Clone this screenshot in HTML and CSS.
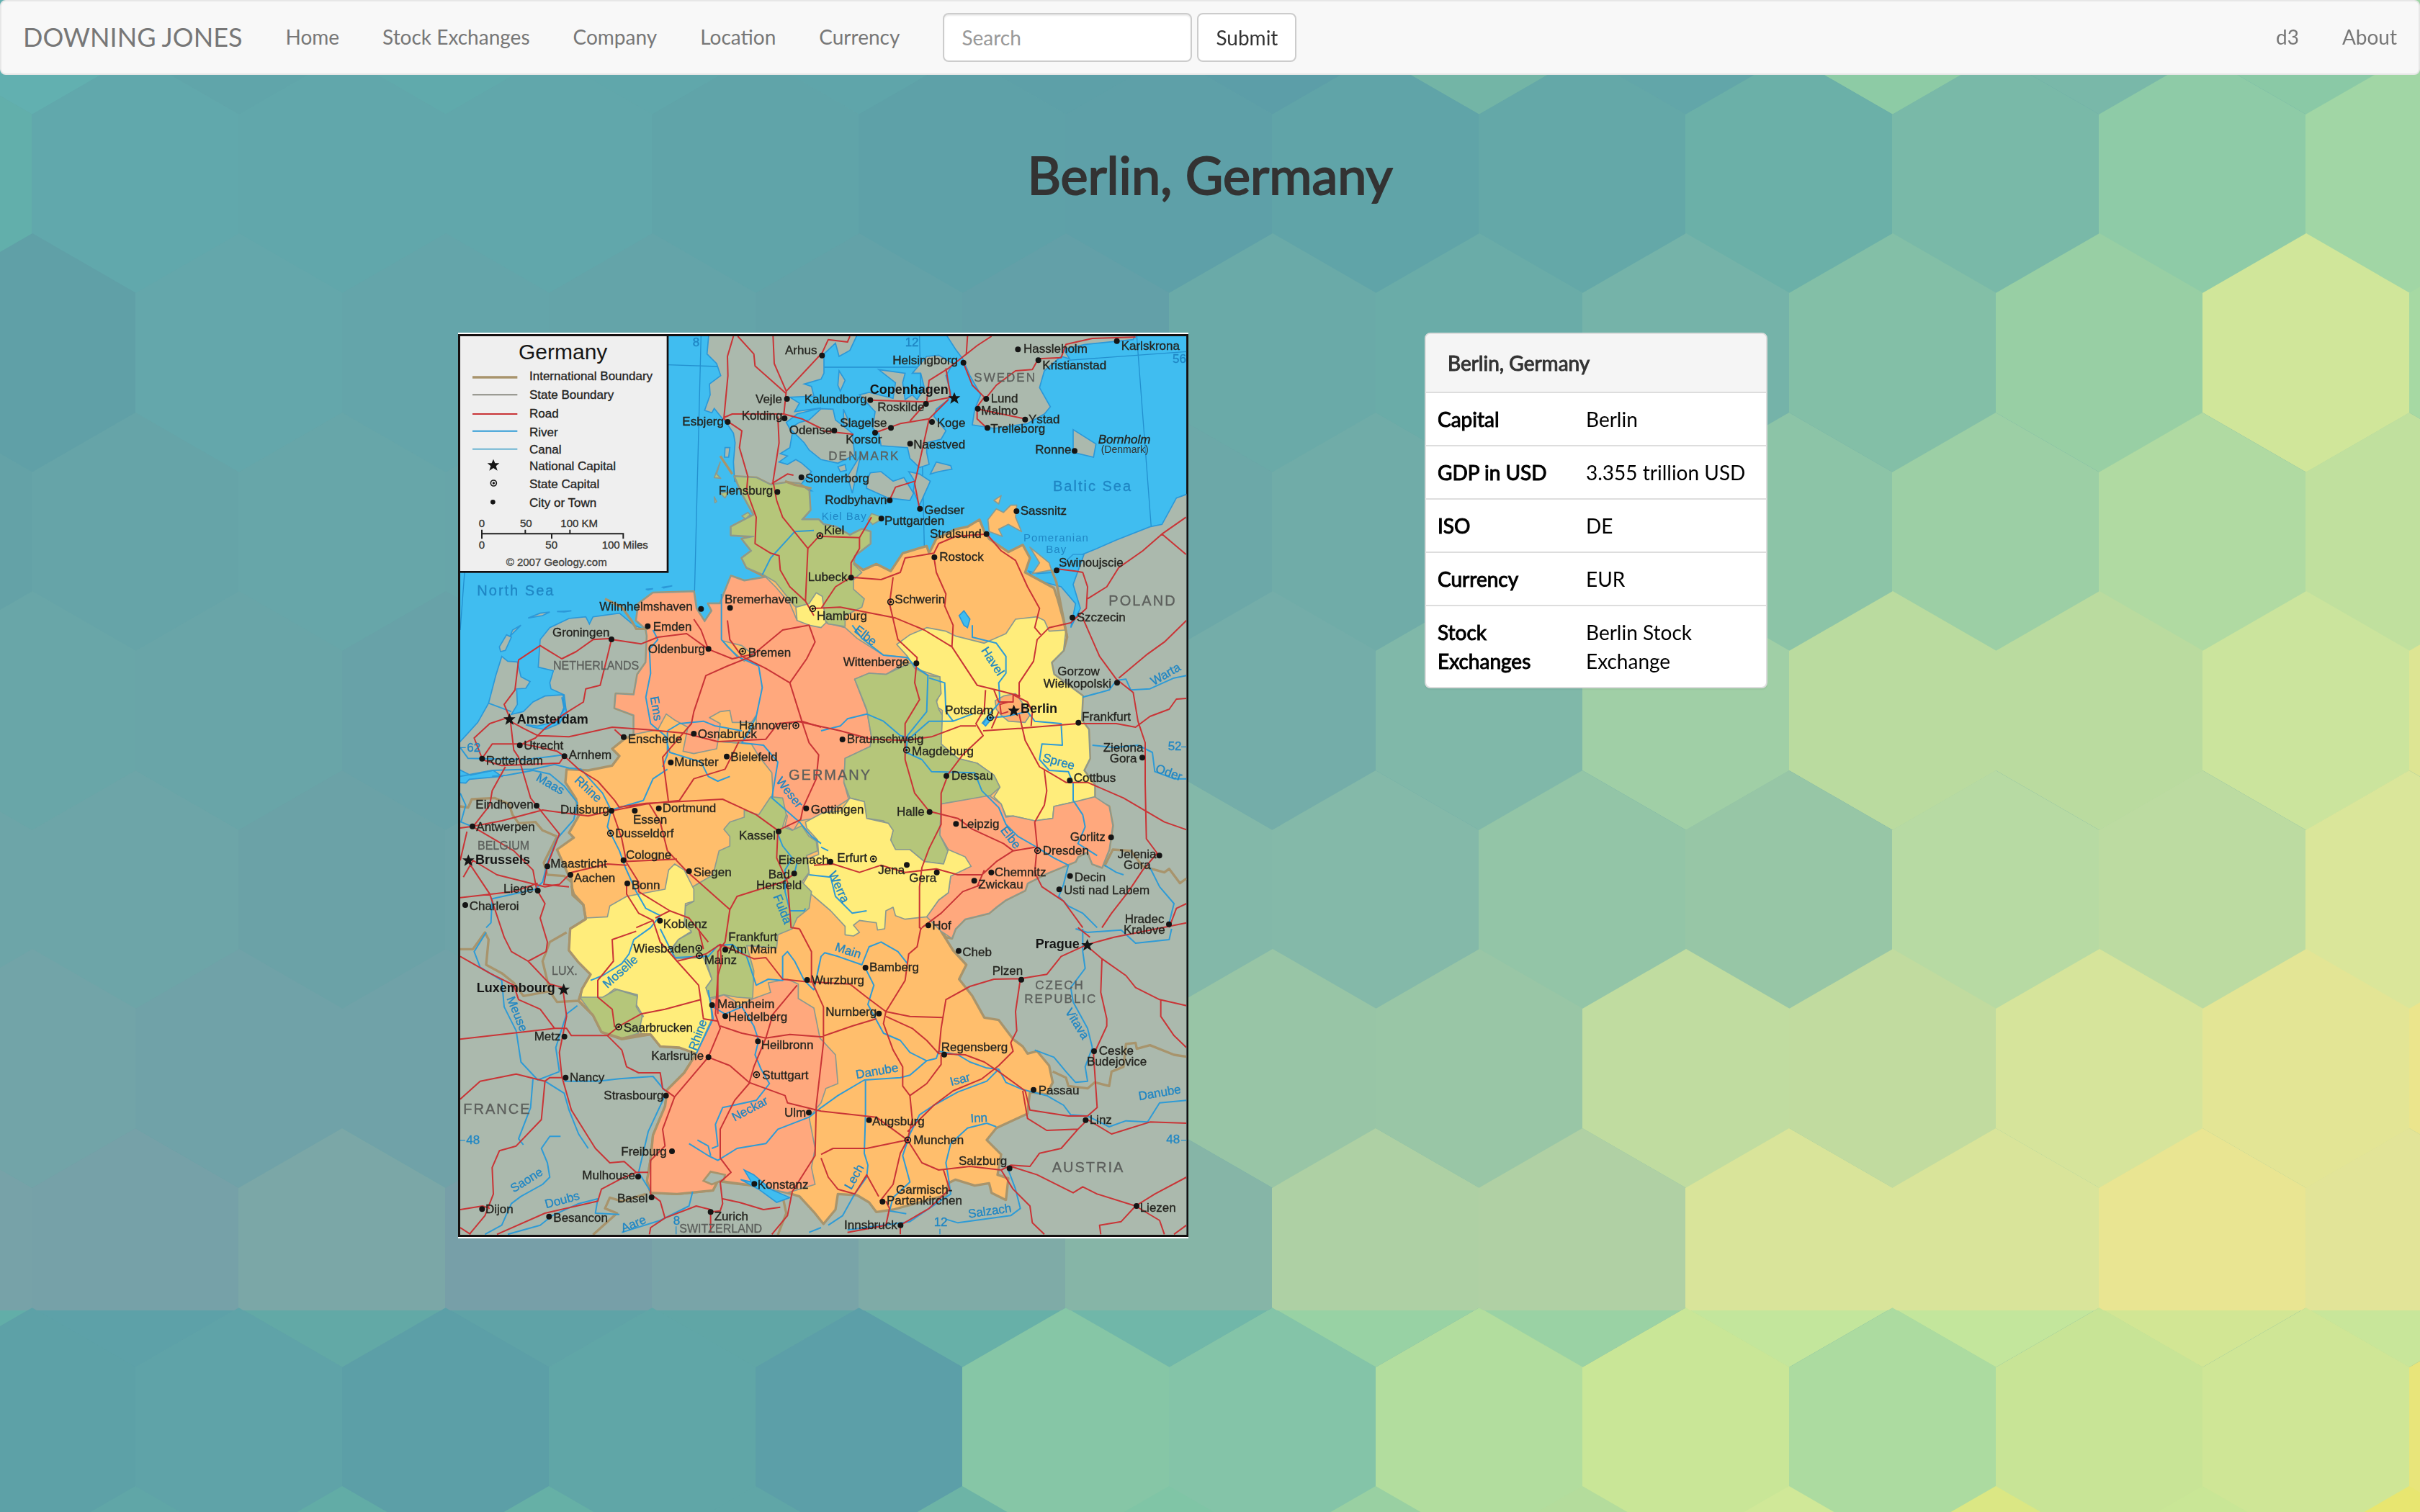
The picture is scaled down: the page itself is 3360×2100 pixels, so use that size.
FILE: index.html
```html
<!DOCTYPE html>
<html lang="en">
<head>
<meta charset="utf-8">
<title>Berlin, Germany</title>
<link rel="stylesheet" href="styles.css">
</head>
<body>
<svg class="backdrop" viewBox="0 0 3360 2100" preserveAspectRatio="xMidYMin slice" aria-hidden="true">
<defs>
<polygon id="hex" points="0,-166 144,-83 144,83 0,166 -144,83 -144,-83"/>
<clipPath id="upper"><rect x="0" y="0" width="3360" height="1820"/></clipPath>
</defs>
<g transform="translate(0 1733)">
<use href="#hex" x="-99" fill="#62aea8"/><use href="#hex" x="188" fill="#5da1a8"/><use href="#hex" x="475" fill="#62a9a6"/><use href="#hex" x="762" fill="#5fa3a7"/><use href="#hex" x="1049" fill="#60a6a6"/><use href="#hex" x="1336" fill="#67b0a8"/><use href="#hex" x="1623" fill="#70b7a9"/><use href="#hex" x="1910" fill="#98d2a4"/><use href="#hex" x="2197" fill="#9ad2a4"/><use href="#hex" x="2484" fill="#c3e69c"/><use href="#hex" x="2771" fill="#c3e69c"/><use href="#hex" x="3058" fill="#d2e694"/><use href="#hex" x="3345" fill="#c8e69a"/>
</g>
<g transform="translate(0 1982)">
<use href="#hex" x="45" fill="#5da1a7"/><use href="#hex" x="332" fill="#5fa3a8"/><use href="#hex" x="619" fill="#5c9fa7"/><use href="#hex" x="906" fill="#60a6a7"/><use href="#hex" x="1193" fill="#5c9fa8"/><use href="#hex" x="1480" fill="#86c6a6"/><use href="#hex" x="1767" fill="#84c4a8"/><use href="#hex" x="2054" fill="#b2dd9e"/><use href="#hex" x="2341" fill="#c9e697"/><use href="#hex" x="2628" fill="#acdba0"/><use href="#hex" x="2915" fill="#c8e496"/><use href="#hex" x="3202" fill="#cfe696"/><use href="#hex" x="3489" fill="#e8e57a"/>
</g>
<g transform="translate(0 2230)">
<use href="#hex" x="188" fill="#60a6a7"/><use href="#hex" x="475" fill="#62aca6"/><use href="#hex" x="762" fill="#66b0a6"/><use href="#hex" x="1049" fill="#60a6a7"/><use href="#hex" x="1336" fill="#6db4a6"/><use href="#hex" x="1623" fill="#80c5a6"/><use href="#hex" x="1910" fill="#99d0a2"/><use href="#hex" x="2197" fill="#b4dc9c"/><use href="#hex" x="2484" fill="#d0e898"/><use href="#hex" x="2771" fill="#dbe784"/><use href="#hex" x="3058" fill="#c9e696"/><use href="#hex" x="3345" fill="#e8e670"/>
</g>
<g clip-path="url(#upper)">
<g transform="translate(0 -7)">
<use href="#hex" x="45" fill="#62b0b0"/><use href="#hex" x="332" fill="#60a5aa"/><use href="#hex" x="619" fill="#60aaac"/><use href="#hex" x="906" fill="#60a7ab"/><use href="#hex" x="1193" fill="#5fa5aa"/><use href="#hex" x="1480" fill="#5da0a8"/><use href="#hex" x="1767" fill="#5c9ea8"/><use href="#hex" x="2054" fill="#73b5a6"/><use href="#hex" x="2341" fill="#62a6a9"/><use href="#hex" x="2628" fill="#8dcba5"/><use href="#hex" x="2915" fill="#79b8a9"/><use href="#hex" x="3202" fill="#8ac9a6"/><use href="#hex" x="3489" fill="#9fd5a5"/>
</g>
<g transform="translate(0 242)">
<use href="#hex" x="-99" fill="#62afab"/><use href="#hex" x="188" fill="#61a8ac"/><use href="#hex" x="475" fill="#61a7ab"/><use href="#hex" x="762" fill="#61a7ab"/><use href="#hex" x="1049" fill="#60a4a9"/><use href="#hex" x="1336" fill="#5ea1a8"/><use href="#hex" x="1623" fill="#5ea0a8"/><use href="#hex" x="1910" fill="#60a4a8"/><use href="#hex" x="2197" fill="#64a8a8"/><use href="#hex" x="2484" fill="#6bb0a8"/><use href="#hex" x="2771" fill="#79b9a8"/><use href="#hex" x="3058" fill="#8ecba7"/><use href="#hex" x="3345" fill="#a1d6a5"/>
</g>
<g transform="translate(0 490)">
<use href="#hex" x="45" fill="#60a0a7"/><use href="#hex" x="332" fill="#64a7ab"/><use href="#hex" x="619" fill="#64a5aa"/><use href="#hex" x="906" fill="#64a4a9"/><use href="#hex" x="1193" fill="#63a2a8"/><use href="#hex" x="1480" fill="#63a0a8"/><use href="#hex" x="1767" fill="#6aaaa8"/><use href="#hex" x="2054" fill="#6aaca8"/><use href="#hex" x="2341" fill="#75b3a9"/><use href="#hex" x="2628" fill="#83bfa7"/><use href="#hex" x="2915" fill="#98cfa4"/><use href="#hex" x="3202" fill="#d0e69a"/><use href="#hex" x="3489" fill="#a6d9a3"/>
</g>
<g transform="translate(0 739)">
<use href="#hex" x="-99" fill="#64a2a7"/><use href="#hex" x="188" fill="#66a4a8"/><use href="#hex" x="475" fill="#67a6a9"/><use href="#hex" x="762" fill="#67a5a9"/><use href="#hex" x="1049" fill="#67a5a9"/><use href="#hex" x="1336" fill="#67a4a8"/><use href="#hex" x="1623" fill="#6ca8a8"/><use href="#hex" x="1910" fill="#70aca8"/><use href="#hex" x="2197" fill="#72ada8"/><use href="#hex" x="2484" fill="#8cc4a7"/><use href="#hex" x="2771" fill="#9ccfa5"/><use href="#hex" x="3058" fill="#b0daa2"/><use href="#hex" x="3345" fill="#c0e09e"/>
</g>
<g transform="translate(0 987)">
<use href="#hex" x="45" fill="#69a6a8"/><use href="#hex" x="332" fill="#69a5a8"/><use href="#hex" x="619" fill="#68a2a8"/><use href="#hex" x="906" fill="#68a2a8"/><use href="#hex" x="1193" fill="#6ca5a8"/><use href="#hex" x="1480" fill="#6fa9a8"/><use href="#hex" x="1767" fill="#74ada9"/><use href="#hex" x="2054" fill="#80b8a9"/><use href="#hex" x="2341" fill="#a0cfa6"/><use href="#hex" x="2628" fill="#badb9f"/><use href="#hex" x="2915" fill="#badb9f"/><use href="#hex" x="3202" fill="#cbe49d"/><use href="#hex" x="3489" fill="#dde593"/>
</g>
<g transform="translate(0 1236)">
<use href="#hex" x="-99" fill="#6da5a8"/><use href="#hex" x="188" fill="#6da5a8"/><use href="#hex" x="475" fill="#6ba2a7"/><use href="#hex" x="762" fill="#6da3a8"/><use href="#hex" x="1049" fill="#6da3a8"/><use href="#hex" x="1336" fill="#70a8a8"/><use href="#hex" x="1623" fill="#83b8a9"/><use href="#hex" x="1910" fill="#84b9a9"/><use href="#hex" x="2197" fill="#93c5a7"/><use href="#hex" x="2484" fill="#97c6a6"/><use href="#hex" x="2771" fill="#b7daa3"/><use href="#hex" x="3058" fill="#bcdba1"/><use href="#hex" x="3345" fill="#dae69a"/>
</g>
<g transform="translate(0 1484)">
<use href="#hex" x="45" fill="#72a4a8"/><use href="#hex" x="332" fill="#70a2a8"/><use href="#hex" x="619" fill="#70a2a8"/><use href="#hex" x="906" fill="#74a4a8"/><use href="#hex" x="1193" fill="#7aa8a8"/><use href="#hex" x="1480" fill="#8ab5a8"/><use href="#hex" x="1767" fill="#98c5a6"/><use href="#hex" x="2054" fill="#99c6a6"/><use href="#hex" x="2341" fill="#c0dca0"/><use href="#hex" x="2628" fill="#c1db9f"/><use href="#hex" x="2915" fill="#d6e49b"/><use href="#hex" x="3202" fill="#e3e595"/><use href="#hex" x="3489" fill="#ebe58c"/>
</g>
<g transform="translate(0 1733)">
<use href="#hex" x="-99" fill="#77a2a8"/><use href="#hex" x="188" fill="#76a1a8"/><use href="#hex" x="475" fill="#7ba7a7"/><use href="#hex" x="762" fill="#779fa8"/><use href="#hex" x="1049" fill="#79a4a8"/><use href="#hex" x="1336" fill="#7faba7"/><use href="#hex" x="1623" fill="#86b5a7"/><use href="#hex" x="1910" fill="#aed0a4"/><use href="#hex" x="2197" fill="#b0d0a4"/><use href="#hex" x="2484" fill="#d9e49a"/><use href="#hex" x="2771" fill="#d9e49a"/><use href="#hex" x="3058" fill="#e9e592"/><use href="#hex" x="3345" fill="#e2e498"/>
</g>
</g>
</svg>

<nav class="navbar">
<a class="brand" href="#">DOWNING JONES</a>
<ul class="nav-links">
<li><a href="#">Home</a></li>
<li><a href="#">Stock Exchanges</a></li>
<li><a href="#">Company</a></li>
<li><a href="#">Location</a></li>
<li><a href="#">Currency</a></li>
</ul>
<form class="nav-search" role="search">
<input class="control" type="text" placeholder="Search" aria-label="Search">
<button class="control" type="button">Submit</button>
</form>
<ul class="nav-links nav-right">
<li><a href="#">d3</a></li>
<li><a href="#">About</a></li>
</ul>
</nav>

<main>
<h1>Berlin, Germany</h1>
<div class="content">
<svg class="map" viewBox="18 21 3042 3774" role="img" aria-label="Map of Germany">
<defs>
<polygon id="star" points="0,-25 7,-8 25,-8 11,4 17,23 0,12 -17,23 -11,4 -25,-8 -7,-8"/>
<g id="ring"><circle r="12" fill="none" stroke="#151515" stroke-width="5"/><circle r="5"/></g>
<clipPath id="frame"><rect x="27" y="36" width="3025" height="3744"/></clipPath>
</defs>
<rect x="18" y="21" width="3042" height="3774" fill="#fff"/>
<rect x="18" y="27" width="3042" height="3762" fill="#151010"/>
<g clip-path="url(#frame)">
<rect x="27" y="36" width="3025" height="3744" fill="#40bdf0"/>
<path class="grid" d="M1030 36L1003 1100M890 155L1100 162M1530 165H1940M1940 36L1960 910M2845 36L2905 830M2560 136L3052 100M45 1020L27 1260"/>

<g class="land">
<path d="M1063 20L1055 110 1095 150 1112 200 1065 235 1068 280 1045 345 1075 355 1085 337 1120 380 1145 410 1165 440 1172 480 1165 560 1170 640 1320 680 1490 680 1445 655 1490 600 1450 565 1425 550 1390 570 1355 560 1390 535 1360 525 1400 500 1410 440 1385 395 1430 360 1530 335 1420 350 1440 315 1400 290 1500 285 1490 245 1460 235 1530 215 1542 190 1542 110 1590 65 1605 120 1650 95 1685 20Z"/>
<path d="M1400 420L1440 395 1480 385 1530 338 1580 340 1590 385 1610 400 1660 440 1670 530 1600 565 1530 550 1480 510 1460 480Z"/>
<path d="M1910 190L1970 120 2020 115 2080 150 2050 200 2070 270 2060 300 2010 340 2000 370 2050 430 2030 465 1970 480 1970 520 1980 570 1940 583 1900 545 1890 500 1780 492 1770 440 1745 420 1755 350 1690 280 1730 270 1830 295 1840 230 1770 175 1880 190 1870 230 1880 300 1910 280 1930 300 1960 250 1945 190Z"/>
<path d="M1720 640L1735 605 1780 600 1830 640 1875 625 1915 690 1900 720 1810 710 1720 670ZM1895 600L1940 610 1985 640 1940 740 1915 680 1920 640ZM1985 610L2010 560 2070 575 2075 590 2020 600ZM1695 530L1660 690 1640 620ZM1605 180L1630 220 1610 265 1600 240ZM1600 580L1630 570 1635 595 1610 600ZM1623 340L1650 400 1625 410Z"/>
<path d="M2045 20L2090 90 2120 130 2150 200 2195 280 2170 340 2160 405 2250 420 2390 400 2460 360 2485 330 2440 250 2460 180 2530 120 2565 130 2540 90 2630 70 2830 50 2840 20Z"/>
<path d="M2580 425L2675 485 2665 540 2580 520ZM1130 500L1150 500 1145 540 1128 540ZM800 1090L830 1088 810 1093ZM870 1082L910 1076 875 1085ZM310 1210L360 1190 400 1185 370 1200ZM430 1183L490 1180 460 1185ZM235 1285L280 1240 245 1260ZM190 1330L220 1280 240 1290 215 1345 195 1350Z"/>
<path d="M0 1750L27 1725 100 1645 145 1565 175 1450 200 1370 225 1390 265 1393 280 1455 318 1475 300 1503 262 1505 265 1570 240 1612 290 1600 330 1560 380 1535 455 1530 460 1580 440 1630 400 1650 330 1665 400 1665 470 1610 460 1530 405 1505 400 1480 415 1430 352 1415 360 1300 400 1250 480 1212 550 1205 565 1235 580 1205 690 1190 750 1240 800 1260 1500 1400 2560 1000 2570 965 2680 920 2760 885 2900 830 2950 820 3010 710 3052 695 3080 690V3800H0Z"/>
</g>
<path class="water" d="M10 1835L70 1865 165 1845 200 1870 65 1882 50 1898 10 1895ZM300 1655L350 1660 430 1640 460 1590 450 1540 470 1600 440 1650 380 1675 330 1665ZM2395 1015L2430 1025 2500 1020 2580 945 2625 945 2580 1070 2610 1170 2570 1250 2590 1150 2530 1080 2420 1050Z"/>

<path class="germany" d="M1170 620L1260 625 1320 655 1390 645 1440 650 1480 680 1485 760 1450 800 1520 800 1540 820 1590 830 1650 865 1700 840 1735 850 1735 900 1670 950 1665 980 1705 1010 1760 985 1820 1015 1870 940 1970 910 1980 940 2010 880 2090 840 2140 830 2190 800 2210 850 2230 880 2310 935 2370 905 2400 960 2380 1020 2500 1085 2515 1130 2540 1220 2555 1290 2540 1345 2490 1395 2500 1445 2620 1535 2615 1635 2645 1675 2650 1795 2625 1845 2670 1905 2670 1965 2730 1995 2745 2075 2730 2175 2700 2250 2660 2235 2640 2185 2600 2205 2590 2225 2470 2275 2390 2315 2380 2345 2300 2385 2260 2415 2230 2440 2130 2465 2090 2505 2075 2545 2050 2540 2030 2515 2080 2595 2135 2655 2105 2715 2160 2785 2210 2875 2270 2885 2330 2965 2370 2995 2390 3025 2430 3015 2480 3075 2495 3145 2470 3195 2400 3185 2395 3225 2390 3275 2260 3335 2220 3385 2280 3445 2265 3530 2310 3545 2300 3635 2240 3605 2230 3565 2170 3575 2090 3550 2060 3565 2050 3615 1830 3675 1760 3685 1730 3645 1680 3615 1600 3610 1590 3675 1540 3735 1500 3685 1440 3620 1390 3605 1250 3575 1160 3565 1100 3555 1080 3595 930 3610 820 3605 805 3555 820 3465 830 3365 880 3245 890 3175 960 3105 1010 3025 940 3000 860 2995 820 2945 700 2965 615 2935 580 2865 520 2805 535 2755 570 2695 520 2645 480 2595 485 2505 550 2465 540 2405 495 2365 490 2295 475 2275 430 2175 500 2125 480 2105 520 2035 510 1965 465 1895 470 1840 560 1845 660 1825 690 1785 660 1755 710 1715 750 1695 750 1615 670 1585 675 1525 750 1530 765 1445 800 1395 805 1285 800 1255 760 1220 770 1150 830 1105 1000 1100 1010 1170 1045 1225 1075 1180 1060 1150 1110 1150 1125 1110 1155 1035 1210 1055 1300 1040 1220 1000 1200 960 1240 930 1200 880 1250 870 1155 865 1155 830 1250 780 1200 690Z"/>
<g class="state">
<path class="orange" d="M2225 800L2260 755 2290 770 2320 740 2345 740 2340 790 2365 850 2310 820 2270 840 2285 870 2230 850ZM2250 720L2280 700 2270 735ZM2400 915L2480 980 2490 1010 2410 1025 2440 980Z"/>
<path class="salmon" d="M800 1255L760 1220 770 1150 830 1105 1000 1100 1010 1170 1045 1225 1075 1180 1060 1150 1110 1150 1125 1110 1155 1035 1210 1055 1300 1040 1340 1080 1400 1150 1430 1220 1550 1230 1630 1250 1680 1295 1790 1365 1890 1375 1850 1415 1800 1445 1730 1440 1670 1465 1720 1595 1740 1705 1735 1745 1630 1795 1625 1895 1645 1965 1530 2040 1440 2055 1415 2095 1380 2075 1390 2035 1330 1955 1325 1855 1270 1785 1240 1735 1100 1725 1095 1755 1000 1775 955 1765 975 1665 920 1635 885 1610 850 1675 750 1695 750 1615 670 1585 675 1525 750 1530 765 1445 800 1395 805 1285Z"/>
<path class="orange" d="M1065 1625L1110 1600 1150 1595 1160 1645 1240 1645 1260 1615 1260 1655 1210 1715 1190 1730 1100 1725 1110 1650ZM1120 1305L1200 1325 1250 1365 1210 1390 1140 1330Z"/>
<path class="green" d="M1170 620L1260 625 1320 655 1390 645 1440 650 1480 680 1485 760 1450 800 1520 800 1540 820 1590 830 1650 865 1700 840 1735 850 1735 900 1670 950 1665 985 1700 1020 1665 1050 1665 1090 1710 1130 1700 1165 1630 1200 1630 1245 1560 1235 1520 1190 1420 1160 1340 1060 1290 1030 1220 1000 1200 960 1240 930 1200 880 1250 870 1155 865 1155 830 1250 780 1200 690ZM1725 800L1740 775 1770 785 1780 800 1745 820ZM1200 785L1225 770 1235 780 1215 797ZM1085 625L1110 560 1095 610 1112 628ZM1110 690L1145 685 1130 710ZM1085 705L1095 725 1088 730Z"/>
<path class="yellow" d="M1425 1165L1480 1150 1510 1105 1535 1120 1550 1230 1530 1250 1480 1240 1430 1220Z"/>
<path class="yellow" d="M1845 1320L1900 1280 1970 1250 2050 1265 2090 1285 2210 1315 2300 1275 2340 1215 2430 1205 2460 1220 2480 1265 2550 1260 2540 1345 2490 1395 2500 1445 2620 1535 2615 1635 2645 1675 2650 1795 2625 1845 2670 1905 2670 1965 2590 1975 2500 1995 2495 2045 2420 2055 2330 2035 2300 2035 2280 1985 2250 1955 2275 1915 2250 1865 2180 1815 2100 1795 2030 1735 2035 1595 2005 1575 2025 1525 2025 1455 1920 1420 1890 1370Z"/>
<path class="berlin" d="M2255 1555L2290 1535 2340 1525 2370 1565 2400 1615 2380 1645 2310 1640 2280 1615 2260 1590Z"/>
<path class="green" d="M1720 2045L1710 1975 1650 1960 1625 1895 1630 1795 1735 1745 1740 1705 1720 1590 1670 1465 1730 1440 1800 1445 1905 1395 1920 1420 1980 1450 2025 1455 2030 1525 2010 1555 2020 1590 2035 1615 2030 1735 2100 1795 2180 1815 2250 1865 2275 1915 2230 1955 2030 1985 2025 2115 2060 2185 2040 2235 1960 2225 1900 2175 1840 2175 1820 2135 1830 2095 1790 2055Z"/>
<path class="salmon" d="M2030 1985L2230 1950 2280 1985 2300 2040 2330 2035 2420 2055 2495 2045 2500 1995 2590 1975 2670 1955 2730 1995 2745 2075 2730 2175 2700 2250 2660 2235 2640 2185 2600 2205 2590 2225 2470 2275 2390 2315 2380 2345 2300 2385 2260 2415 2230 2440 2130 2465 2090 2505 2075 2545 2030 2515 1970 2455 2020 2385 2060 2355 2070 2285 2150 2245 2060 2175 2025 2115Z"/>
<path class="yellow" d="M1650 1960L1710 1975 1720 2045 1810 2065 1830 2095 1820 2135 1840 2175 1900 2175 1960 2225 2040 2235 2060 2175 2130 2205 2155 2245 2070 2285 2060 2355 2020 2385 1970 2455 1880 2465 1840 2450 1830 2415 1800 2430 1795 2505 1765 2510 1760 2480 1690 2470 1665 2490 1690 2520 1665 2535 1630 2530 1630 2495 1570 2430 1500 2370 1450 2325 1480 2275 1470 2215 1520 2195 1515 2135 1470 2085 1465 2060 1540 2020 1610 2015Z"/>
<path class="green" d="M1320 1955L1370 1960 1385 2030 1370 2080 1410 2095 1450 2075 1480 2120 1510 2140 1515 2180 1470 2200 1480 2270 1450 2310 1490 2350 1480 2420 1430 2460 1410 2505 1350 2530 1345 2585 1220 2575 1250 2680 1245 2795 1180 2790 1125 2780 1060 2795 1050 2750 1075 2715 1050 2635 925 2630 905 2600 935 2550 990 2520 960 2490 965 2410 1000 2390 995 2330 1080 2280 1105 2180 1150 2160 1150 2120 1125 2090 1150 2060 1210 2040 1210 2010 1270 2030Z"/>
<path class="yellow" d="M485 2505L550 2460 640 2455 650 2410 720 2370 880 2340 895 2260 920 2235 960 2260 1000 2340 1000 2390 965 2400 960 2490 990 2515 935 2550 905 2590 925 2630 1040 2625 1075 2715 1050 2750 1070 2810 1075 2880 1010 3025 940 3000 860 2995 820 2945 780 2940 770 2880 790 2870 760 2820 765 2780 670 2755 620 2795 530 2790 535 2755 570 2695 520 2645 480 2595Z"/>
<path class="green" d="M525 2790L620 2790 680 2758 765 2785 760 2830 785 2870 770 2940 700 2962 615 2935 580 2865Z"/>
<path class="salmon" d="M1010 3025L1080 2880 1070 2800 1125 2780 1170 2805 1180 2830 1250 2795 1320 2770 1310 2730 1390 2715 1435 2735 1435 2795 1500 2835 1525 2960 1590 3030 1600 3150 1550 3170 1530 3230 1480 3290 1505 3420 1490 3500 1505 3570 1390 3605 1250 3575 1160 3565 1100 3555 1080 3595 930 3610 820 3605 805 3555 820 3465 830 3365 880 3245 890 3175 960 3105Z"/>
</g>
<path class="border-line" d="M27 1995L60 2000 75 1965 170 1960 230 1985 245 2030 270 2065 340 2060 370 2095 430 2120M430 2120L375 2230 390 2280 460 2285 490 2310M27 2590L80 2590 130 2520 145 2550 135 2655 200 2690 250 2730 290 2785 400 2765 430 2810 520 2805M400 2765L370 2640 400 2560 470 2520M490 2325L500 2360 540 2405 550 2465 485 2505 480 2595 520 2645 570 2695 535 2755 520 2805M580 3780L680 3690 630 3670 650 3625 700 3640 800 3610M520 2805L580 2865 615 2935 700 2962 780 2945 820 2945 860 2995 940 3000 1010 3025 960 3105 890 3175 880 3245 830 3365 820 3465 805 3555 820 3605 930 3610 1080 3595 1100 3555 1250 3575M1370 3620L1385 3690 1350 3780M2495 3100L2550 3125 2560 3160 2640 3170 2670 3145 2730 3160 2740 3100 2790 3080 2800 2985 2840 2980 2845 3005 2900 2990 3000 3030 3052 3038M2710 2245L2745 2175 2820 2180 2870 2245 2960 2270 2980 2255 3025 2315 3052 2295M2490 1010L2510 1060 2555 1290M630 1130L700 1165 740 1220 760 1255 810 1255M1110 535L1160 610M1380 640L1420 655 1490 670"/>
<path class="land-fill" d="M1040 3555L1070 3517 1130 3530 1125 3550 1075 3570Z"/>
<path class="water" d="M1210 3510L1250 3530 1320 3590 1400 3625 1345 3645 1270 3590 1195 3550 1240 3560ZM2105 1200L2125 1180 2150 1215 2140 1250 2125 1240ZM2205 1650L2225 1620 2245 1625 2215 1660Z"/>

<g class="river">
<path d="M1285 1030L1320 960 1420 850 1500 845M1115 1110L1115 1300 1180 1370 1270 1410 1285 1500 1260 1620 1230 1680 1200 1730 1290 1740 1350 1810 1325 1960 1440 2060 1490 2120 1530 2150M830 1260L850 1300 815 1340 820 1440 800 1540 820 1650 880 1700 900 1770 1030 1810 1060 1870 1100 1890 1150 1870"/>
<path d="M890 1680L940 1650 1040 1640 1090 1660 1200 1680M870 1830L890 1780 890 1680M655 2010L790 1970 830 1880 890 1840M27 1750L60 1795 300 1800 460 1780M27 1870L160 1845 330 1840 420 1820 480 1835 530 1840 620 1940 655 2010 640 2080 690 2180 715 2250 760 2350 800 2420 860 2450M27 1940L50 1990 30 2060 80 2080M160 1870L220 1865 330 1845 400 1860 460 1910 515 1980 500 2050 430 2130 390 2230 370 2310 340 2340 160 2380 155 2480 135 2500M145 1565L240 1600M860 2450L820 2500 750 2550 730 2610 700 2650 620 2700 570 2720M860 2505L920 2625 1030 2620 1060 2620 1100 2575 1160 2570 1220 2620 1260 2740 1310 2715 1370 2720 1370 2620 1390 2600 1420 2640 1460 2720 1500 2760M1500 2760L1530 2620 1545 2605 1600 2620 1700 2655 1730 2580 1780 2560 1850 2600 1890 2650M1710 2660L1750 2740 1725 2820 1790 2940 1860 2970 1900 3020 1970 3055"/>
<path d="M1350 2110L1370 2160 1410 2210 1380 2260 1380 2350 1400 2430 1460 2430 1465 2420M1420 2270L1430 2230M1530 2165L1560 2180M1480 2280L1570 2290 1590 2370 1660 2440 1720 2430"/>
<path d="M1660 1240L1700 1295 1790 1365 1890 1375 1920 1410 1975 1450 1970 1600 1930 1650 1890 1700 1885 1770 1950 1800 1990 1850 2170 1855 2200 1930 2270 2000 2300 2070 2350 2120 2420 2160 2500 2210 2560 2240 2540 2320 2520 2370 2560 2410 2620 2440 2680 2500"/>
<path d="M1530 1680L1610 1660 1640 1630 1720 1610 1790 1640 1860 1700 1900 1710 1980 1640 2080 1640 2160 1610M1980 1460L2045 1480 2050 1600 2080 1640M2160 1240L2160 1290 2260 1315 2300 1370 2300 1440 2270 1480 2275 1560 2240 1600 2200 1650M2240 1625L2300 1620 2390 1600 2420 1640 2530 1650 2535 1740 2450 1735 2440 1800 2480 1845 2560 1850 2580 1900 2580 1970 2620 2030 2630 2080 2600 2150 2680 2200M2620 1540L2730 1510 2760 1470 2800 1465 2820 1510 2900 1505 3000 1460 3052 1450M2660 1740L2750 1750 2850 1740 2910 1770 2920 1850 3000 1880 3052 1880M2710 2240L2760 2270 2790 2280M2900 2250L2940 2330 3000 2400 2980 2480M2590 2505L2640 2520 2780 2510 2840 2565 2980 2550 2990 2505M2620 2505V2600L2630 2670 2570 2750 2580 2810 2640 2920 2660 3000 2630 3080 2640 3140 2590 3145 2550 3100 2500 3040 2420 3010"/>
<path d="M1530 3250L1600 3200 1710 3135 1860 3125 1900 3115 1970 3055 2010 3045 2020 3015 2100 3030 2150 3060 2220 3085 2270 3090 2300 3145 2370 3175 2470 3200 2540 3240 2570 3280 2640 3285 2730 3330 2800 3305 2890 3310 2940 3230 3052 3220M1715 3135L1715 3280 1710 3440 1725 3490 1720 3540 1670 3610 1620 3700 1560 3740M2270 3090L2220 3140 2100 3185 2000 3240 1940 3280 1900 3360 1870 3450 1900 3560 1830 3625 1815 3680 1885 3692M2260 3330L2220 3315 2140 3335 2070 3400 2050 3480 2060 3540 2070 3610 1980 3670 1900 3725 1640 3760M2310 3510L2340 3590 2360 3670 2320 3700 2100 3730 2050 3715"/>
<path d="M135 2520L85 2600 110 2665 200 2720 210 2830 260 2930 280 3060 350 3135 440 3100M330 3130L320 3250 270 3380 290 3405M440 3100L425 3000 470 2860 515 2825M460 3140L600 3140 690 3130 830 3120 880 3180M880 3200L810 3350 770 3520 820 3600M380 3140L460 3190 480 3260 520 3360 560 3420M445 3370L400 3370 365 3420 390 3480 400 3540 370 3570 280 3620 240 3650 200 3740 130 3778M225 3778L360 3740 410 3700 520 3650 600 3630 590 3690 690 3695M700 3770L860 3720 980 3660 995 3600M1010 3025L1080 2880 1060 2760M1080 2830L1130 2860 1200 2830 1250 2910 1270 2970 1255 3030 1280 3090 1315 3150 1260 3220 1120 3250 1090 3320 1100 3410 1075 3420M980 3400L1060 3450 1100 3470 1180 3420 1300 3400 1350 3340 1480 3290 1530 3250M1015 3385L1060 3410 1070 3450M1480 3770L1530 3750"/>
</g>

<g class="road">
<path d="M1165 36L1140 120 1142 200 1125 380 1200 430 1190 500 1225 620 1220 680 1260 790 1255 900 1320 940 1355 950 1360 1010 1400 1080 1465 1140M1125 375L1160 360 1375 360 1385 265 1530 110M1183 36L1250 110 1255 160 1385 275M1330 36L1335 150 1385 265M1375 360L1450 380 1530 420M1350 370L1355 480 1330 640 1345 720 1370 790 1475 920 1530 860M1325 650L1390 610 1415 615M1475 920L1465 1140 1500 1200M1530 115L1560 50 1640 60 1650 36"/>
<path d="M2140 36L2135 110 2060 170 1980 220 1970 310 1735 302M2120 140L2160 240 2210 290 2180 330 2180 380 2220 418M2130 115L2180 75 2240 36M2050 170L2070 290 1970 310M2060 300L1980 380 1940 560 1920 650 1940 755M1755 438L1860 400 1980 380M1900 390L1970 310M1535 430L1665 445M2185 340L2380 380M2220 290L2260 240 2340 180 2410 175 2435 130 2530 125 2550 70 2660 45 2840 40M1920 640L1840 665 1815 720"/>
<path d="M1530 870L1690 875 1740 790M1690 875L1690 920 1655 980 1655 1040 1590 1080 1530 1170M1655 1040L1780 1050 1860 1020 1880 960 2000 940 2020 900 2090 870 2220 860 2280 930 2340 970 2390 1080 2440 1170 2420 1250 2445 1280M1830 1040L1815 1150 1850 1300 1930 1375 1920 1480 1940 1550 1880 1650 1880 1800 1920 1940 1980 2015M2000 955L2010 1020 2050 1110 2045 1160 2080 1240 2075 1330M1500 1170L1610 1165 1840 1210 1960 1260 2075 1330 2180 1490 2260 1510 2360 1535M2510 1005L2590 1015 2620 1020 2640 1080 2635 1170 2570 1230 2480 1250 2430 1300 2415 1390 2355 1480 2355 1540M2640 1130L2720 1080 2770 1000 2870 930 2950 860 3050 790M2950 860L3050 945M2620 1210L2690 1370 2760 1465 2830 1520 2850 1640 2880 1730 2880 1900 2885 2130 2930 2190 2870 2260 2810 2350 2740 2440 2700 2500M2770 1460L2890 1360 2960 1310 3052 1220"/>
<path d="M2215 1510L2210 1590 2175 1650 2205 1700 2120 1780 2060 1860 2030 1940 2030 2070 1980 2170 1950 2250 1940 2330 1940 2500 1950 2505M2250 1510L2270 1560 2330 1560 2330 1530 2390 1560 2410 1600 2405 1660M2310 1560L2275 1570 2280 1610 2310 1600M2270 1600L2240 1670M2175 1660L2110 1660 1990 1705 1880 1720 1740 1715 1610 1680 1430 1640M2205 1680L2350 1670 2600 1650 2760 1650 2840 1665 2900 1620 2980 1590 3010 1548 3052 1545M2355 1610L2380 1720 2440 1830 2550 1895 2640 1895 2790 1960 2960 2060 3052 2092M2460 1845L2470 1930 2460 1990 2420 2060 2430 2160 2420 2270 2450 2330 2540 2390 2620 2500M1980 2015L2100 2045 2160 2090 2290 2150 2330 2180 2420 2165M2330 2180L2260 2225 2200 2280 2100 2280 2010 2255 1880 2270 1780 2240 1690 2270 1580 2235 1500 2240M2180 2330L2210 2260M2200 2320L2120 2350 2030 2440 1950 2500"/>
<path d="M1000 1215L1030 1260 1060 1340 1160 1380 1250 1360 1370 1260 1480 1240 1505 1310 1470 1380 1400 1480 1450 1640 1480 1730 1520 1780 1510 1880 1455 2000 1445 2050 1350 2095 1345 2210 1390 2310 1405 2500 1440 2505M1140 1220L1150 1300 1200 1370 1300 1420 1400 1480M1240 1370L1140 1410 1050 1450 1000 1600 990 1650 870 1790 895 1980M660 1300L780 1318 850 1290 970 1275 1060 1340M657 1300L640 1370 610 1490 550 1505 540 1560 460 1610 380 1670 340 1710 275 1740M657 1295L580 1300 510 1350 450 1380 360 1325 270 1385 255 1510 210 1570 235 1630 250 1760 270 1790 320 1960 440 2110 390 2240 375 2320 480 2330M235 1640L290 1670 350 1700 480 1705 660 1665 800 1675 960 1690 1100 1725 1300 1715 1350 1650 1450 1640 1530 1665M670 1675L705 1707M225 1625L150 1650 85 1710 118 1795 160 1735 290 1735 430 1765 460 1785 520 1840 600 1890 670 1970 690 2000M118 1800L200 1825 440 1815 460 1785M215 1830L160 1930 150 1990 80 2080 250 2180 330 2260 345 2340 380 2400 360 2460 390 2560 385 2600 310 2640M27 2085L78 2078 200 2055 370 2010 560 2035 660 2013 800 1985 940 1970 1000 1880 1130 1840 1190 1720M690 1998L800 1982 1120 1965 1260 2030 1350 2095M815 1985L860 2060 890 2180 970 2265 1150 2425 1130 2560 1100 2600 1100 2860M660 2013L700 2130 720 2230 770 2310 770 2350 900 2430 980 2460 1060 2560M700 2225L930 2215M720 2240L640 2235 490 2270 440 2320 380 2330 180 2280 80 2220 40 2290M60 2225L150 2360 210 2540 240 2600 310 2640 400 2735 455 2750M27 2375L250 2350 350 2315M55 2100L27 2220M720 2320V2360L770 2440 830 2470 760 2500M830 2470L860 2560 930 2640 1020 2740 1040 2880 1100 2890M1150 2425L1180 2370 1370 2310M1370 2310L1420 2275M900 2430L840 2460"/>
<path d="M27 2620L150 2690 250 2740 270 2800 360 2840 420 2920 27 2965M455 2760L470 2870 440 3020 450 3120 490 3260 590 3420 650 3480 710 3475 760 3520 810 3520M420 2920L470 2920 490 2950 640 2950 700 3010 720 3080 770 3105 860 3105 870 3170 920 3205M640 2950L690 2910 780 2860 880 2840 1030 2800M760 2515L660 2550 665 2640 600 2720 600 2790 660 2840 670 2915M27 3215L110 3140 260 3110 380 3140 365 3300 260 3410 190 3430 160 3500 165 3610 130 3700 65 3778M380 3140L400 3125 450 3125M27 3675L120 3660 150 3670M27 3750L70 3778M180 3778L380 3690 600 3640 615 3590 700 3545 760 3520M1060 3040L920 3205 870 3340 880 3410 820 3470 820 3610 860 3640 880 3710 820 3750 815 3778M930 2640L1050 2610 1110 2570 1250 2630 1300 2625 1370 2715 1460 2725 1650 2735M1110 2570L1115 2650 1100 2700 1090 2860 1110 2920 1060 3040M1110 2910L1200 2940 1300 2960 1400 2945 1530 2955 1660 2910 1760 2880M1430 2740L1330 2860 1300 2960 1250 3080 1230 3150 1170 3220 1110 3340 1110 3460 1155 3520 1110 3560 1120 3650 1110 3680 1070 3685M1060 3040L1150 3075 1230 3145 1380 3200 1390 3230 1530 3265 1760 3290 1890 3385M1440 2505L1490 2600 1490 2720 1540 2830 1540 2980 1510 3240 1505 3450 1410 3600 1390 3700 1325 3778M880 3710L1010 3660 1070 3675M1120 3630L1190 3645 1290 3675 1360 3665M1070 3690L1070 3770M1020 2505L1040 2590"/>
<path d="M1945 2505L1930 2580 1895 2610 1880 2720 1800 2850 1790 2900 1830 3010 1870 3080 1870 3160 1900 3200 1910 3300 1890 3385 1860 3440 1830 3570 1775 3640M1650 2735L1720 2790 1800 2850 1900 2870 2040 2875M1800 2870L1910 2920 1970 2970 2020 3025 2130 3030 2210 3060 2270 3100 2380 3180 2400 3260 2560 3285 2640 3285 2680 3250 2665 3030 2720 2910 2720 2880 2695 2770 2700 2630M2370 3180L2390 3295 2470 3345 2600 3340 2640 3300 2740 3360 2900 3310 3052 3315M2020 3025L2030 2920 2050 2800 2150 2745 2250 2715 2360 2713 2470 2695 2530 2620 2640 2570 2750 2540 3052 2480M2360 2715L2340 2850 2345 2930 2320 2980 2330 3015 2270 3075 2200 3130 2080 3180 2000 3240 1890 3350M2630 2570L2700 2630 2800 2700 2840 2750 2940 2800 3052 2825M2945 2800L2945 2870 3000 2950 3052 3000M1530 3445L1580 3420 1720 3420 1890 3385 1950 3480 2020 3510 2150 3495 2280 3510 2320 3490 2400 3495 2440 3440 2530 3420 2600 3340M2040 3510L2065 3590 1980 3670M1530 3460L1560 3540 1600 3590 1670 3610 1720 3530 1770 3620M1800 3640L1815 3670 1800 3740 1640 3770M1860 3740L1980 3670M1860 3740V3778M2280 3510L2330 3590 2400 3660 2410 3730 2460 3778M2320 3495L2430 3530 2580 3605 2620 3580 2680 3610 2840 3660 2920 3610 3052 3540M2840 3660L2780 3725 2690 3740 2695 3778M2840 3660L2940 3720 2960 3778M3052 3740L3000 3778M2650 2540L2600 2500M2980 2500L3010 2420 3052 2400M2030 3030L2030 3070 1970 3150 1900 3200"/>
</g>

<path class="dots" d="M1388 297h0M1378 378h0M1141 393h0M1448 624h0M1348 685h0M1030 1172h0M1151 1168h0M808 1244h0M1534 116h0M2123 146h0M2350 91h0M2762 56h0M2435 136h0M1735 302h0M1967 318h0M2218 297h0M2183 338h0M2380 383h0M2223 418h0M1992 393h0M1821 418h0M1755 438h0M1585 429h0M1901 484h0M2586 514h0M1816 720h0M1942 755h0M2344 765h0M1781 796h0M2219 860h0M2002 957h0M2511 1012h0M1655 1042h0M2577 1208h0M657 1299h0M1061 1339h0M1000 1692h0M708 1706h0M275 1741h0M461 1786h0M118 1796h0M904 1812h0M1137 1787h0M345 1992h0M657 2013h0M754 2013h0M854 2003h0M1468 2003h0M78 2078h0M1353 2099h0M707 2219h0M390 2245h0M486 2280h0M980 2265h0M1418 2275h0M723 2316h0M350 2346h0M48 2406h0M859 2471h0M1927 1399h0M2763 1480h0M2602 1646h0M1619 1716h0M2868 1792h0M2052 1868h0M2566 1887h0M1982 2018h0M2092 2068h0M2738 2124h0M2939 2200h0M1569 2225h0M1887 2239h0M2012 2270h0M2239 2270h0M2168 2305h0M2567 2285h0M2522 2341h0M2979 2486h0M1977 2491h0M1131 2592h0M1472 2718h0M1076 2823h0M1131 2869h0M461 2954h0M1267 2974h0M1061 3040h0M466 3125h0M884 3200h0M1479 3271h0M909 3432h0M768 3538h0M1252 3568h0M824 3624h0M118 3673h0M397 3704h0M1070 3685h0M2103 2597h0M2364 2717h0M1715 2667h0M1771 2858h0M2043 3029h0M2667 3015h0M2415 3176h0M1730 3302h0M2632 3302h0M2315 3503h0M1786 3642h0M1861 3740h0M2844 3660h0"/>
<g><use href="#ring" x="1525" y="867"/><use href="#ring" x="1495" y="1171"/><use href="#ring" x="1820" y="1143"/><use href="#ring" x="1203" y="1349"/><use href="#ring" x="1425" y="1658"/><use href="#ring" x="653" y="2107"/><use href="#ring" x="2235" y="1625"/><use href="#ring" x="1886" y="1760"/><use href="#ring" x="2432" y="2179"/><use href="#ring" x="1748" y="2214"/><use href="#ring" x="1021" y="2586"/><use href="#ring" x="1023" y="2617"/><use href="#ring" x="687" y="2914"/><use href="#ring" x="1261" y="3113"/><use href="#ring" x="1891" y="3385"/></g>
<g><use href="#star" x="2085" y="294"/><use href="#star" x="232" y="1632"/><use href="#star" x="61" y="2220"/><use href="#star" x="2333" y="1596"/><use href="#star" x="458" y="2758"/><use href="#star" x="2639" y="2573"/></g>

<g class="city">
<text x="1380" y="112">Arhus</text><text x="1257" y="314">Vejle</text><text x="1460" y="314">Kalundborg</text><text x="1199" y="384">Kolding</text><text x="952" y="409">Esbjerg</text><text x="1397" y="444">Odense</text><text x="1464" y="646">Sonderborg</text><text x="1103" y="697">Flensburg</text><text x="1475" y="1057">Lubeck</text><text x="1128" y="1149">Bremerhaven</text><text x="607" y="1179">Wilmhelmshaven</text><text x="830" y="1264">Emden</text>
<text x="1828" y="152">Helsingborg</text><text x="2373" y="106">Hassleholm</text><text x="2780" y="92">Karlskrona</text><text x="2452" y="173">Kristianstad</text><text x="1765" y="348">Roskilde</text><text x="2237" y="313">Lund</text><text x="2197" y="363">Malmo</text><text x="2394" y="398">Ystad</text><text x="2236" y="438">Trelleborg</text><text x="2012" y="413">Koge</text><text x="1609" y="413">Slagelse</text><text x="1633" y="484">Korsor</text><text x="1915" y="504">Naestved</text><text x="2422" y="524">Ronne</text><text x="1546" y="735">Rodbyhavn</text><text x="1960" y="776">Gedser</text><text x="2360" y="781">Sassnitz</text><text x="1794" y="821">Puttgarden</text><text x="1542" y="861">Kiel</text><text x="1983" y="876">Stralsund</text><text x="2023" y="972">Rostock</text><text x="2520" y="997">Swinoujscie</text><text x="1837" y="1148">Schwerin</text><text x="1512" y="1218">Hamburg</text><text x="2594" y="1224">Szczecin</text>
<text x="411" y="1288">Groningen</text><text x="809" y="1355">Oldenburg</text><text x="1226" y="1370">Bremen</text><text x="1188" y="1673">Hannover</text><text x="1016" y="1711">Osnabruck</text><text x="725" y="1731">Enschede</text><text x="292" y="1757">Utrecht</text><text x="479" y="1797">Arnhem</text><text x="134" y="1822">Rotterdam</text><text x="919" y="1828">Munster</text><text x="1153" y="1807">Bielefeld</text><text x="91" y="2004">Eindhoven</text><text x="444" y="2024">Duisburg</text><text x="869" y="2019">Dortmund</text><text x="1487" y="2024">Gottingen</text><text x="747" y="2068">Essen</text><text x="673" y="2124">Dusseldorf</text><text x="94" y="2098">Antwerpen</text><text x="1188" y="2134">Kassel</text><text x="717" y="2214">Cologne</text><text x="403" y="2250">Maastricht</text><text x="1352" y="2234">Eisenach</text><text x="500" y="2310">Aachen</text><text x="998" y="2285">Siegen</text><text x="1310" y="2294">Bad</text><text x="1260" y="2341">Hersfeld</text><text x="740" y="2341">Bonn</text><text x="207" y="2356">Liege</text><text x="65" y="2426">Charleroi</text><text x="872" y="2502">Koblenz</text>
<text x="1622" y="1411">Wittenberge</text><text x="2515" y="1450">Gorzow</text><text x="2456" y="1501">Wielkopolski</text><text x="2047" y="1611">Potsdam</text><text x="2616" y="1637">Frankfurt</text><text x="1637" y="1732">Braunschweig</text><text x="1908" y="1783">Magdeburg</text><text x="2705" y="1767">Zielona</text><text x="2732" y="1813">Gora</text><text x="2073" y="1883">Dessau</text><text x="2582" y="1893">Cottbus</text><text x="1845" y="2034">Halle</text><text x="2111" y="2085">Leipzig</text><text x="2567" y="2140">Gorlitz</text><text x="2453" y="2196">Dresden</text><text x="2765" y="2210">Jelenia</text><text x="2790" y="2256">Gora</text><text x="1597" y="2225">Erfurt</text><text x="1768" y="2276">Jena</text><text x="1897" y="2311">Gera</text><text x="2252" y="2286">Chemnitz</text><text x="2185" y="2336">Zwickau</text><text x="2585" y="2306">Decin</text><text x="2541" y="2361">Usti nad Labem</text><text x="2795" y="2482">Hradec</text><text x="2790" y="2527">Kralove</text><text x="1993" y="2507">Hof</text>
<text x="1144" y="2557">Frankfurt</text><text x="748" y="2603">Wiesbaden</text><text x="1144" y="2608">Am Main</text><text x="1043" y="2653">Mainz</text><text x="1098" y="2834">Mannheim</text><text x="1143" y="2890">Heidelberg</text><text x="335" y="2970">Metz</text><text x="707" y="2934">Saarbrucken</text><text x="1280" y="3005">Heilbronn</text><text x="823" y="3050">Karlsruhe</text><text x="483" y="3141">Nancy</text><text x="1285" y="3131">Stuttgart</text><text x="625" y="3216">Strasbourg</text><text x="1377" y="3287">Ulm</text><text x="697" y="3449">Freiburg</text><text x="535" y="3549">Mulhouse</text><text x="1265" y="3588">Konstanz</text><text x="681" y="3644">Basel</text><text x="132" y="3690">Dijon</text><text x="415" y="3725">Besancon</text><text x="1085" y="3720">Zurich</text>
<text x="2119" y="2618">Cheb</text><text x="2243" y="2698">Plzen</text><text x="1731" y="2683">Bamberg</text><text x="1490" y="2735">Wurzburg</text><text x="1549" y="2869">Nurnberg</text><text x="2030" y="3015">Regensberg</text><text x="2687" y="3030">Ceske</text><text x="2637" y="3076">Budejovice</text><text x="2435" y="3196">Passau</text><text x="1743" y="3323">Augsburg</text><text x="2648" y="3318">Linz</text><text x="1915" y="3403">Munchen</text><text x="2103" y="3488">Salzburg</text><text x="1842" y="3608">Garmisch-</text><text x="1803" y="3654">Partenkirchen</text><text x="2858" y="3684">Liezen</text><text x="1626" y="3755">Innsbruck</text>
<text x="2684" y="483" font-style="italic">Bornholm</text>
</g>
<text class="note" x="2696" y="522">(Denmark)</text>
<g class="capital"><text x="1733" y="275">Copenhagen</text><text x="263" y="1649">Amsterdam</text><text x="90" y="2235">Brussels</text><text x="2361" y="1605">Berlin</text><text x="95" y="2768">Luxembourg</text><text x="2423" y="2587">Prague</text></g>
<g class="country"><text x="2167" y="226">SWEDEN</text><text x="1561" y="553">DENMARK</text><text x="414" y="1424" class="tight">NETHERLANDS</text><text x="99" y="2174" class="tight">BELGIUM</text><text x="2422" y="2757">CZECH</text><text x="2377" y="2813">REPUBLIC</text><text x="408" y="2697" class="tight">LUX.</text><text x="940" y="3770" class="tight">SWITZERLAND</text></g>
<g class="country big"><text x="2728" y="1157">POLAND</text><text x="1395" y="1883">GERMANY</text><text x="40" y="3275">FRANCE</text><text x="2492" y="3518">AUSTRIA</text></g>
<g class="sea"><text x="97" y="1115">North Sea</text><text x="2496" y="680">Baltic Sea</text></g>
<g class="bay"><text x="1532" y="802">Kiel Bay</text><text x="2373" y="890">Pomeranian</text><text x="2467" y="940">Bay</text></g>
<g class="flow">
<text x="995" y="77">8</text><text x="1880" y="77">12</text><text x="2994" y="148">56</text><text x="55" y="1768">62</text><text x="2975" y="1762">52</text><text x="52" y="3402">48</text><text x="2968" y="3398">48</text><text x="914" y="3738">8</text><text x="2000" y="3745">12</text>
<text transform="translate(818 1540) rotate(80)">Ems</text><text transform="translate(340 1885) rotate(30)">Maas</text><text transform="translate(500 1890) rotate(43)">Rhine</text><text transform="translate(1340 1890) rotate(52)">Weser</text><text transform="translate(1330 2370) rotate(68)">Fulda</text>
<text transform="translate(1665 1265) rotate(38)">Elbe</text><text transform="translate(2195 1345) rotate(57)">Havel</text><text transform="translate(2915 1492) rotate(-30)">Warta</text><text transform="translate(2450 1807) rotate(15)">Spree</text><text transform="translate(2920 1850) rotate(20)">Oder</text><text transform="translate(2275 2095) rotate(52)">Elbe</text><text transform="translate(1560 2275) rotate(65)">Werra</text>
<text transform="translate(640 2755) rotate(-42)">Moselle</text><text transform="translate(220 2795) rotate(68)">Meuse</text><text transform="translate(1010 3015) rotate(-70)">Rhine</text><text transform="translate(1170 3308) rotate(-28)">Neckar</text><text transform="translate(250 3605) rotate(-32)">Saone</text><text transform="translate(385 3670) rotate(-15)">Doubs</text><text transform="translate(705 3770) rotate(-22)">Aare</text>
<text transform="translate(1585 2595) rotate(18)">Main</text><text transform="translate(2545 2850) rotate(58)">Vitava</text><text transform="translate(1678 3130) rotate(-10)">Danube</text><text transform="translate(2072 3160) rotate(-15)">Isar</text><text transform="translate(2153 3312) rotate(-3)">Inn</text><text transform="translate(2855 3220) rotate(-10)">Danube</text><text transform="translate(1655 3595) rotate(-60)">Lech</text><text transform="translate(2145 3710) rotate(-8)">Salzach</text>
</g>
<path class="grid" d="M27 3386H48M3030 3386H3052M27 1750H50M3030 1747H3052M926 3745V3778M2025 3755V3778"/>

<rect x="22" y="31" width="869" height="987" fill="#efefef" stroke="#151010" stroke-width="8"/>
<text class="map-title" x="455" y="132">Germany</text>
<g fill="none" stroke-width="6"><path stroke="#a8946c" stroke-width="11" d="M78 207H265"/><path stroke="#8c8c84" d="M78 280H265"/><path stroke="#c93436" d="M78 360H265"/><path stroke="#2e9bd6" d="M78 431H265"/><path stroke="#6bb5d2" d="M78 506H265"/><path stroke="#222" d="M117 842V880M117 859H706V880M298 842V859M484 842V859M408 859V880"/></g>
<use href="#star" x="165" y="573"/><use href="#ring" x="166" y="648"/><circle cx="163" cy="727" r="10"/>
<g class="legend"><text x="315" y="218">International Boundary</text><text x="315" y="297">State Boundary</text><text x="315" y="374">Road</text><text x="315" y="453">River</text><text x="315" y="524">Canal</text><text x="315" y="594">National Capital</text><text x="315" y="670">State Capital</text><text x="315" y="746">City or Town</text></g>
<g class="scale"><text x="104" y="830">0</text><text x="276" y="830">50</text><text x="445" y="830">100 KM</text><text x="104" y="921">0</text><text x="382" y="921">50</text><text x="617" y="921">100 Miles</text></g>
<text class="copyright" x="218" y="992">© 2007 Geology.com</text>
</g>
</svg>

<section class="panel">
<h2>Berlin, Germany</h2>
<table>
<tbody>
<tr><th scope="row">Capital</th><td>Berlin</td></tr>
<tr><th scope="row">GDP in USD</th><td>3.355 trillion USD</td></tr>
<tr><th scope="row">ISO</th><td>DE</td></tr>
<tr><th scope="row">Currency</th><td>EUR</td></tr>
<tr><th scope="row">Stock Exchanges</th><td>Berlin Stock Exchange</td></tr>
</tbody>
</table>
</section>
</div>
</main>
</body>
</html>
```
FILE: styles.css
```css
* { box-sizing: border-box; }

body {
  margin: 0;
  min-height: 100vh;
  background: #68a6a8;
  color: #333;
  font: 28px/40px Lato, "Liberation Sans", sans-serif;
}

.backdrop {
  position: fixed;
  inset: 0;
  z-index: -1;
  width: 100%;
  height: 100%;
}

/* Navigation */
.navbar {
  display: flex;
  align-items: center;
  min-height: 104px;
  border: 2px solid #e7e7e7;
  border-radius: 8px;
  background: #f8f8f8;
}

.navbar a {
  display: block;
  padding: 29px 30px 31px;
  color: #777;
  text-decoration: none;
}

.navbar .brand { font-size: 36px; }

.nav-links {
  display: flex;
  margin: 0;
  padding: 0;
  list-style: none;
}

.nav-right { margin-left: auto; }

.nav-search {
  display: flex;
  gap: 7px;
  padding: 0 30px;
}

.control {
  height: 68px;
  padding: 12px 24px;
  border: 2px solid #ccc;
  border-radius: 8px;
  background: #fff;
  color: #333;
  font: inherit;
}

button.control { line-height: 38px; }

input.control {
  width: 346px;
  box-shadow: inset 0 2px 2px rgba(0, 0, 0, .08);
}

input.control::placeholder { color: #999; opacity: 1; }

/* Page */
main {
  max-width: 2340px;
  margin: 0 auto;
  padding: 99px 0 100px;
}

h1 {
  margin: 0 0 180px;
  font-size: 72px;
  font-weight: 400;
  line-height: 79px;
  text-align: center;
  -webkit-text-stroke: 2px currentColor;
}

.content {
  display: flex;
  align-items: flex-start;
  gap: 328px;
  padding-left: 126px;
}

/* Details panel */
.panel {
  flex: 0 0 476px;
  overflow: hidden;
  border: 2px solid #ddd;
  border-radius: 8px;
  background: #fff;
  box-shadow: 0 2px 2px rgba(0, 0, 0, .05);
}

.panel h2 {
  margin: 0;
  padding: 20px 30px;
  background: #f5f5f5;
  font-size: 28px;
  font-weight: 400;
  line-height: 40px;
  -webkit-text-stroke: 1px currentColor;
}

.panel table {
  width: 100%;
  border-collapse: separate;
  border-spacing: 0;
  color: #000;
}

.panel th,
.panel td {
  padding: 16px;
  border-top: 2px solid #ddd;
  text-align: left;
  vertical-align: top;
}

.panel th {
  width: 206px;
  font-weight: 400;
  -webkit-text-stroke: 1px currentColor;
}

/* Map */
.map {
  flex: 0 1 1014px;
  min-width: 0;
  font-family: "Liberation Sans", Arial, sans-serif;
  fill: #151515;
}

.land path { fill: #abb9ad; stroke: #2b98d8; stroke-width: 5; }
.land-fill { fill: #abb9ad; stroke: #a8946c; stroke-width: 8; }
.water { fill: #40bdf0; stroke: #2b98d8; stroke-width: 5; }
.germany { fill: #ffbe6c; stroke: #a8946c; stroke-width: 10; stroke-linejoin: round; }
.state path { stroke: #8a9a90; stroke-width: 5; stroke-linejoin: round; }
.state .orange { fill: #ffbe6c; }
.state .salmon { fill: #ffa87d; }
.state .green { fill: #b5c67a; }
.state .yellow { fill: #ffed7b; }
.state .berlin { fill: #ffb070; }
.border-line { fill: none; stroke: #a8946c; stroke-width: 10; stroke-linejoin: round; }
.grid { fill: none; stroke: #2390cf; stroke-width: 4; }
.river path { fill: none; stroke: #2e9bd6; stroke-width: 6; stroke-linejoin: round; }
.road path { fill: none; stroke: #c93436; stroke-width: 6; stroke-linejoin: round; }
.dots { fill: none; stroke: #151515; stroke-width: 24; stroke-linecap: round; }

.city, .legend { font-size: 51px; fill: #24241f; stroke: #24241f; stroke-width: 1; }
.scale { font-size: 45px; fill: #33332f; stroke: #33332f; stroke-width: 1; }
.note { font-size: 42px; fill: #33332f; }
.copyright { font-size: 45px; fill: #44443f; stroke: #44443f; stroke-width: 1; }
.capital { font-size: 54px; font-weight: 700; }
.country { font-size: 51px; letter-spacing: 6px; fill: #5c5f5c; stroke: #5c5f5c; stroke-width: 1; }
.country .tight { font-size: 48px; letter-spacing: 0; }
.country.big { font-size: 60px; }
.sea { font-size: 60px; letter-spacing: 6px; fill: #1f86c4; stroke: #1f86c4; stroke-width: 1; }
.bay { font-size: 45px; letter-spacing: 3px; fill: #1f86c4; }
.flow { font-size: 51px; fill: #1f86c4; stroke: #1f86c4; stroke-width: 1; }
.map-title { font-size: 90px; text-anchor: middle; }
```
